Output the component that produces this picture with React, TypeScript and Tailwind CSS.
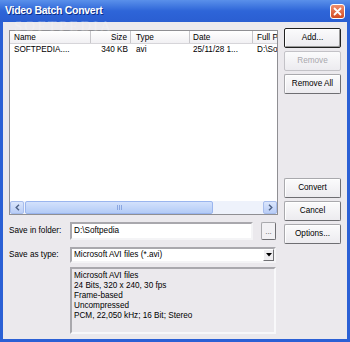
import React from 'react';

const font = { fontFamily: '"Liberation Sans", Arial, sans-serif' };

type BtnProps = { label: string; disabled?: boolean; primary?: boolean };

const Btn: React.FC<BtnProps> = ({ label, disabled, primary }) => {
  let cls =
    'h-[20px] w-full flex items-center justify-center rounded-[2px] text-[8.2px] bg-gradient-to-b from-[#fbfbfc] to-[#ecebef] ';
  if (primary) {
    cls += 'border border-[#202020] text-black shadow-[inset_1px_1px_0_#ffffff,inset_-1px_-1px_0_#9a9a9a]';
  } else if (disabled) {
    cls += 'border border-[#c3c2c7] text-[#a9a8ad]';
  } else {
    cls +=
      'border border-[#a9a9ad] border-r-[#6e6e72] border-b-[#6e6e72] text-black shadow-[inset_1px_1px_0_#ffffff]';
  }
  return <div className={cls}>{label}</div>;
};

const cols = [
  { w: 'w-[81px]', h: 'Name', v: 'SOFTPEDIA....', cls: 'pl-[4px] text-left' },
  { w: 'w-[40px]', h: 'Size', v: '340 KB', cls: 'pr-[3px] text-right' },
  { w: 'w-[59px]', h: 'Type', v: 'avi', cls: 'pl-[5px] text-left' },
  { w: 'w-[63px]', h: 'Date', v: '25/11/28 1...', cls: 'pl-[3px] text-left' },
  { w: 'w-[60px]', h: 'Full Path', v: 'D:\\Softpedia\\', cls: 'pl-[4px] text-left' },
];

const info = [
  'Microsoft AVI files',
  '24 Bits, 320 x 240, 30 fps',
  'Frame-based',
  'Uncompressed',
  'PCM, 22,050 kHz; 16 Bit; Stereo',
];

export default function App() {
  return (
    <div
      className="relative w-[350px] h-[342px] flex flex-col bg-[#2b60d5] px-[3px] pb-[3px] overflow-hidden"
      style={font}
    >
      {/* title bar */}
      <div className="-mx-[3px] h-[22px] flex items-center justify-between pl-[5px] pr-[5px] bg-gradient-to-b from-[#5a90ea] via-[#2e65d8] to-[#2a5ed2]">
        <span className="text-white font-bold text-[10.5px] tracking-[-0.3px] [text-shadow:1px_1px_0_#0b2f8a]">
          Video Batch Convert
        </span>
        <div className="w-[15px] h-[15px] rounded-[3px] border border-white bg-gradient-to-b from-[#ef8d6c] to-[#d24a20] flex items-center justify-center">
          <svg width="9" height="9" viewBox="0 0 9 9">
            <path d="M1.5 1.5 L7.5 7.5 M7.5 1.5 L1.5 7.5" stroke="white" strokeWidth="1.8" strokeLinecap="round" />
          </svg>
        </div>
      </div>

      {/* client */}
      <div className="flex-1 bg-[#ebe9ed] flex pl-[6px] pr-[6px] gap-[6px]">
        <div className="w-[269px] flex flex-col pt-[8px]">
          {/* list view */}
          <div className="h-[185px] border border-[#8f8f93] bg-white flex flex-col overflow-hidden">
            <div className="flex h-[13px] bg-gradient-to-b from-[#ffffff] to-[#f1f0f3] border-b border-[#d6d5d9] text-[8.2px] leading-[13px] text-black">
              {cols.map((c, i) => (
                <div
                  key={c.h}
                  className={`${c.w} shrink-0 whitespace-nowrap overflow-hidden ${c.cls} ${
                    i < cols.length - 1 ? 'border-r border-[#c7c6ca]' : ''
                  }`}
                >
                  {c.h}
                </div>
              ))}
            </div>
            <div className="flex h-[12px] text-[8.2px] leading-[12px] text-black">
              {cols.map((c) => (
                <div key={c.h} className={`${c.w} shrink-0 whitespace-nowrap overflow-hidden ${c.cls}`}>
                  {c.v}
                </div>
              ))}
            </div>
            <div className="flex-1" />
            {/* horizontal scrollbar */}
            <div className="h-[13px] flex bg-[#eef2fb]">
              <div className="w-[14px] h-full rounded-[2px] border border-[#a7bdec] bg-gradient-to-b from-[#dbe6fc] to-[#b9cdf6] flex items-center justify-center">
                <svg width="5" height="7" viewBox="0 0 5 7">
                  <path d="M4 0.8 L1.2 3.5 L4 6.2" stroke="#4d6185" strokeWidth="1.4" fill="none" />
                </svg>
              </div>
              <div className="w-[188px] h-full ml-px rounded-[2px] border border-[#9ab5ee] bg-gradient-to-b from-[#d3e1fc] to-[#b3cbf6] flex items-center justify-center gap-[1px]">
                <span className="w-px h-[5px] bg-[#8aa6e0]" />
                <span className="w-px h-[5px] bg-[#8aa6e0]" />
                <span className="w-px h-[5px] bg-[#8aa6e0]" />
              </div>
              <div className="flex-1" />
              <div className="w-[14px] h-full rounded-[2px] border border-[#a7bdec] bg-gradient-to-b from-[#dbe6fc] to-[#b9cdf6] flex items-center justify-center">
                <svg width="5" height="7" viewBox="0 0 5 7">
                  <path d="M1 0.8 L3.8 3.5 L1 6.2" stroke="#4d6185" strokeWidth="1.4" fill="none" />
                </svg>
              </div>
            </div>
          </div>

          {/* save in folder */}
          <div className="mt-[7px] h-[18px] flex items-center text-[8.2px]">
            <div className="w-[61px] text-black">Save in folder:</div>
            <div className="w-[183px] h-full bg-white border-2 border-[#a9a8ad] border-r-[#f4f4f6] border-b-[#f4f4f6] pl-[2px] leading-[14px] text-black">
              D:\Softpedia
            </div>
            <div className="ml-[8px] w-[15px] h-full rounded-[2px] border border-[#a9a9ad] border-r-[#6e6e72] border-b-[#6e6e72] bg-[#f2f1f4] flex items-end justify-center pb-[3px] text-[8px] leading-none text-[#555]">
              ...
            </div>
          </div>

          {/* save as type */}
          <div className="mt-[7px] h-[16px] flex items-center text-[8.2px]">
            <div className="w-[61px] text-black">Save as type:</div>
            <div className="w-[206px] h-full bg-white border-2 border-[#a9a8ad] border-r-[#f4f4f6] border-b-[#f4f4f6] flex items-center">
              <span className="flex-1 pl-[2px] text-black">Microsoft AVI files (*.avi)</span>
              <div className="w-[11px] h-[12px] bg-[#efeef1] border border-[#fff] border-r-[#707074] border-b-[#707074] flex items-center justify-center">
                <svg width="6" height="4" viewBox="0 0 6 4">
                  <path d="M0 0 H6 L3 3.5 Z" fill="#000" />
                </svg>
              </div>
            </div>
          </div>

          {/* info box */}
          <div className="mt-[4px] ml-[61px] w-[206px] h-[67px] border-2 border-[#a9a8ad] border-r-[#f8f8fa] border-b-[#f8f8fa] pl-[2px] pt-[2px] text-[8.2px] leading-[10px] text-black">
            {info.map((l) => (
              <div key={l}>{l}</div>
            ))}
          </div>
        </div>

        {/* buttons */}
        <div className="w-[57px] flex flex-col pt-[6px] gap-[3px]">
          <Btn label="Add..." primary />
          <Btn label="Remove" disabled />
          <Btn label="Remove All" />
          <div className="h-[78px]" />
          <Btn label="Convert" />
          <Btn label="Cancel" />
          <Btn label="Options..." />
        </div>
      </div>

      {/* watermark */}
      <div
        className="absolute left-[14px] top-[15px] text-[15px] tracking-[2px] text-white/25 pointer-events-none"
        style={{ fontFamily: '"Liberation Serif", serif' }}
      >
        SOFTPEDIA
      </div>
    </div>
  );
}
